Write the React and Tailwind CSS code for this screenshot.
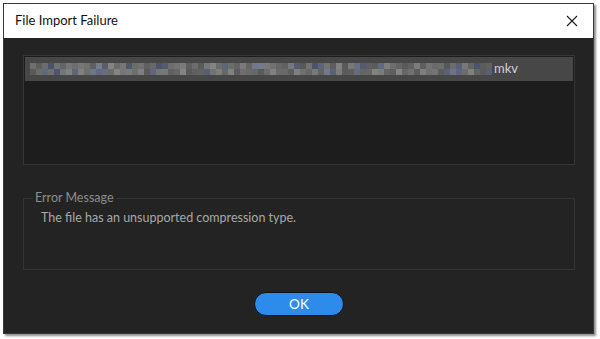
import { useMemo } from "react";

const FONT = { fontFamily: 'Lato, "Noto Sans", sans-serif' };

// blurred-out file name, drawn as a little pixel mosaic
function Mosaic() {
  const cells = useMemo(() => {
    let seed = 7;
    const rnd = () => {
      seed = (seed * 9301 + 49297) % 233280;
      return seed / 233280;
    };
    const rows = [];
    for (let r = 0; r < 2; r++) {
      const row = [];
      for (let c = 0; c < 77; c++) {
        const base = 88 + Math.floor(rnd() * 46);
        const tint = rnd() > 0.8 ? 14 : 0;
        row.push(`rgb(${base - tint}, ${base - tint / 2}, ${base + tint})`);
      }
      rows.push(row);
    }
    return rows;
  }, []);

  return (
    <div className="flex flex-col blur-[0.6px]">
      {cells.map((row, i) => (
        <div key={i} className="flex">
          {row.map((color, j) => (
            <span key={j} className="h-[6px] w-[6px]" style={{ background: color }} />
          ))}
        </div>
      ))}
    </div>
  );
}

function CloseIcon() {
  return (
    <svg width="12" height="12" viewBox="0 0 12 12" fill="none" stroke="#1a1a1a" strokeWidth="1.1">
      <path d="M1 1 L11 11 M11 1 L1 11" />
    </svg>
  );
}

export default function App() {
  return (
    <div className="min-h-[339px] w-[600px] bg-white p-[3px]" style={FONT}>
      <div className="flex h-[331px] w-[591px] flex-col border border-[#3a3a3a] shadow-[2px_2px_2px_rgba(0,0,0,0.45)]">
        <div className="flex h-[34px] items-center justify-between bg-white pl-[11px] pr-[15px]">
          <span className="text-[13px] text-[#111]">File Import Failure</span>
          <CloseIcon />
        </div>

        <div className="flex flex-1 flex-col bg-[#232323] pl-[19px] pr-[18px] pt-[17px]">
          <div className="h-[110px] border border-[#363636] bg-[#1d1d1d] p-px">
            <div className="flex h-[24px] items-center gap-[2px] bg-[#474747] pl-[5px]">
              <Mosaic />
              <span className="text-[13px] text-[#cfcfdc]">mkv</span>
            </div>
          </div>

          <fieldset className="mt-[24px] h-[81px] border border-[#333333] px-[17px]">
            <legend className="-ml-[8px] px-[2px] text-[12.5px] text-[#8d8d8d]">Error Message</legend>
            <p className="pt-[2px] text-[12.5px] leading-[16px] text-[#a8a8a8]">
              The file has an unsupported compression type.
            </p>
          </fieldset>

          <div className="flex justify-center pt-[22px]">
            <button className="h-[24px] w-[90px] rounded-full border border-[#111] bg-[#2d8ceb] text-[13.5px] text-white">
              OK
            </button>
          </div>
        </div>
      </div>
    </div>
  );
}
